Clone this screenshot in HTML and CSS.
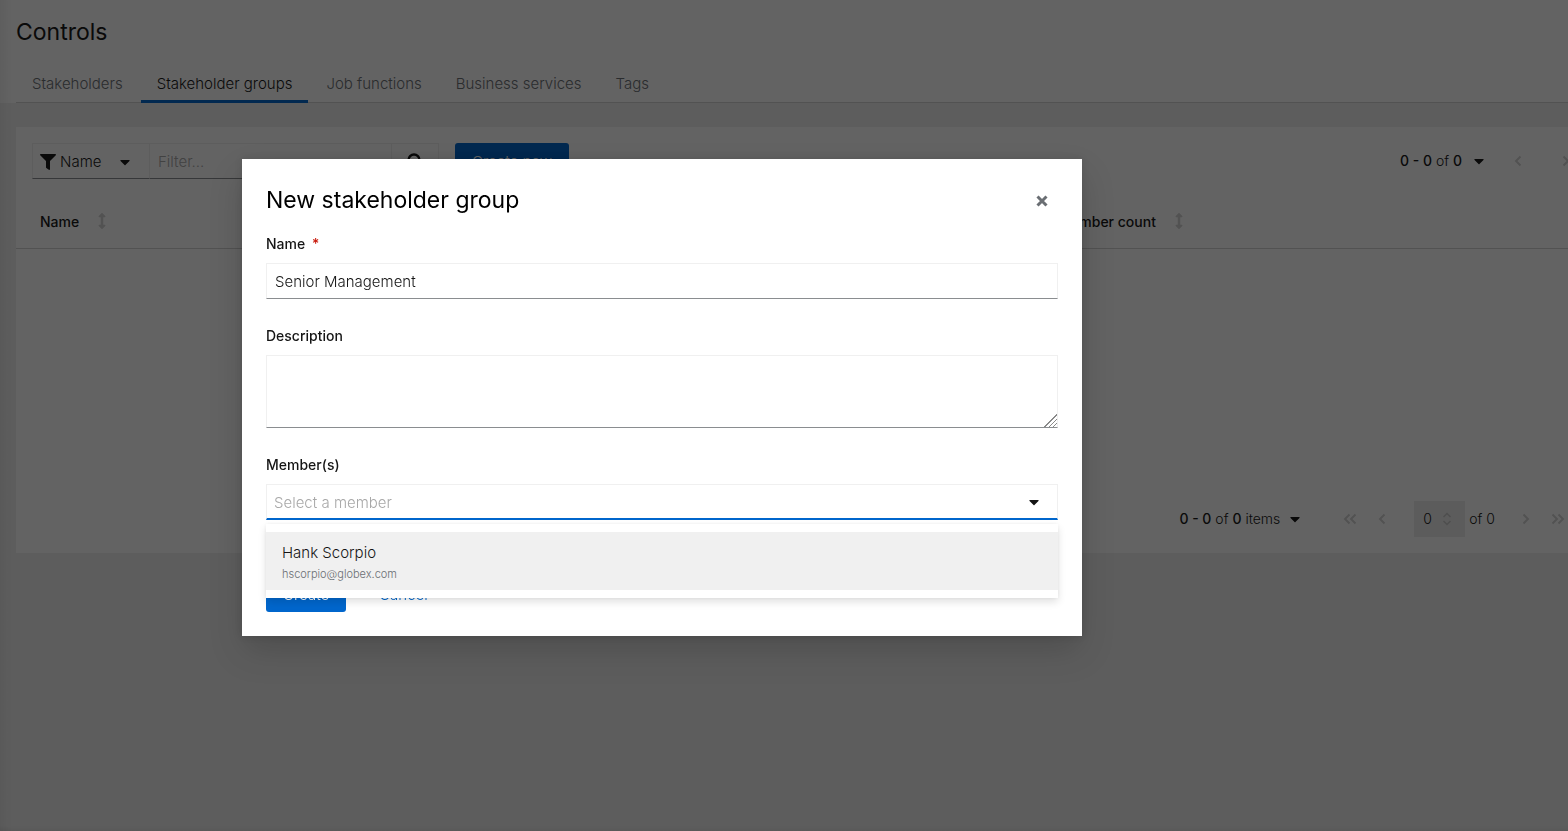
FILE: index.html
```html
<!DOCTYPE html>
<html lang="en">
<head>
<meta charset="utf-8">
<title>Controls</title>
<link rel="stylesheet" href="styles.css">
</head>
<body>
<svg class="defs" aria-hidden="true">
  <symbol id="caret" viewBox="0 0 320 512"><path d="M31.3 192h257.3c17.8 0 26.7 21.5 14.1 34.1L174.1 354.8c-7.8 7.8-20.5 7.8-28.3 0L17.2 226.1C4.6 213.5 13.5 192 31.3 192z"/></symbol>
  <symbol id="left" viewBox="0 0 10 12"><path d="M7.500 1.500 3 6l4.500 4.500" fill="none" stroke="currentColor" stroke-width="2"/></symbol>
  <symbol id="right" viewBox="0 0 10 12"><path d="M2.500 1.500 7 6l-4.500 4.500" fill="none" stroke="currentColor" stroke-width="2"/></symbol>
  <symbol id="first" viewBox="0 0 14 12"><path d="M6.500 1.500 2 6l4.500 4.500M12.500 1.500 8 6l4.500 4.500" fill="none" stroke="currentColor" stroke-width="2"/></symbol>
  <symbol id="last" viewBox="0 0 14 12"><path d="M1.500 1.500 6 6l-4.500 4.500M7.500 1.500 12 6l-4.500 4.500" fill="none" stroke="currentColor" stroke-width="2"/></symbol>
  <symbol id="sort" viewBox="0 0 256 512"><path d="M214.059 377.941H168V134.059h46.059c21.382 0 32.090-25.851 16.971-40.971L144.971 7.029c-9.373-9.373-24.568-9.373-33.941 0L24.971 93.088c-15.119 15.119-4.411 40.971 16.971 40.971H88v243.882H41.941c-21.382 0-32.090 25.851-16.971 40.971l86.059 86.059c9.373 9.373 24.568 9.373 33.941 0l86.059-86.059c15.120-15.119 4.412-40.971-16.970-40.971z"/></symbol>
</svg>
<div class="app">
  <header class="page-header">
    <h1 class="page-title">Controls</h1>
    <nav class="tabs" aria-label="Controls">
      <a class="tab" href="#stakeholders">Stakeholders</a>
      <a class="tab tab-current" href="#groups" aria-current="page">Stakeholder groups</a>
      <a class="tab" href="#jobs">Job functions</a>
      <a class="tab" href="#services">Business services</a>
      <a class="tab" href="#tags">Tags</a>
    </nav>
  </header>
  <main class="card">
    <div class="toolbar">
      <div class="filter">
        <button class="filter-toggle" type="button">
          <svg class="icon-filter" viewBox="0 0 512 512"><path d="M487.976 0H24.028C2.710 0-8.047 25.866 7.058 40.971L192 225.941V432c0 7.831 3.821 15.170 10.237 19.662l80 55.980C298.020 518.690 320 507.493 320 487.980V225.941l184.947-184.970C520.021 25.896 509.338 0 487.976 0z"/></svg>
          <span>Name</span>
          <svg class="caret"><use href="#caret"/></svg>
        </button>
        <input class="filter-input" type="search" placeholder="Filter..." aria-label="Filter">
        <button class="filter-search" type="button" aria-label="Search">
          <svg class="icon-search" viewBox="0 0 16 16"><circle cx="7" cy="7" r="5.500" fill="none" stroke="currentColor" stroke-width="2.400"/><path d="m11 11 4 4" stroke="currentColor" stroke-width="2.400"/></svg>
        </button>
      </div>
      <button class="button primary" type="button">Create new</button>
      <div class="pager pager-top">
        <button class="pager-menu" type="button"><span><b>0 - 0</b> of <b>0</b></span><svg class="caret"><use href="#caret"/></svg></button>
        <button class="pager-step" type="button" aria-label="Previous page" disabled><svg class="chevron"><use href="#left"/></svg></button>
        <button class="pager-step" type="button" aria-label="Next page" disabled><svg class="chevron"><use href="#right"/></svg></button>
      </div>
    </div>
    <table class="table">
      <thead>
        <tr>
          <th class="col-name" scope="col">Name<svg class="sort"><use href="#sort"/></svg></th>
          <th class="col-count" scope="col">Member count<svg class="sort"><use href="#sort"/></svg></th>
        </tr>
      </thead>
    </table>
    <div class="pager pager-bottom">
      <button class="pager-menu" type="button"><span><b>0 - 0</b> of <b>0</b> items</span><svg class="caret"><use href="#caret"/></svg></button>
      <button class="pager-step" type="button" aria-label="First page" disabled><svg class="chevron-double"><use href="#first"/></svg></button>
      <button class="pager-step" type="button" aria-label="Previous page" disabled><svg class="chevron"><use href="#left"/></svg></button>
      <label class="pager-page">
        <span class="pager-number">
          <input class="pager-input" type="number" value="0" aria-label="Current page" disabled>
          <svg class="spinner" viewBox="0 0 10 14"><path d="M1.500 5 5 1.500 8.500 5M1.500 9 5 12.500 8.500 9" fill="none" stroke="currentColor" stroke-width="1.500"/></svg>
        </span>
        <span>of 0</span>
      </label>
      <button class="pager-step" type="button" aria-label="Next page" disabled><svg class="chevron"><use href="#right"/></svg></button>
      <button class="pager-step" type="button" aria-label="Last page" disabled><svg class="chevron-double"><use href="#last"/></svg></button>
    </div>
  </main>
</div>
<div class="backdrop">
  <section class="modal" role="dialog" aria-modal="true" aria-labelledby="modal-title">
    <div class="modal-head">
      <h2 class="modal-title" id="modal-title">New stakeholder group</h2>
      <button class="modal-close" type="button" aria-label="Close"><svg class="icon-close" viewBox="0 0 12 12"><path d="m1.500 1.500 9 9M10.500 1.500l-9 9" stroke="currentColor" stroke-width="3"/></svg></button>
    </div>
    <form class="form">
      <div class="field">
        <label class="label" for="name">Name <span class="required">*</span></label>
        <input class="control" id="name" type="text" value="Senior Management">
      </div>
      <div class="field">
        <label class="label" for="description">Description</label>
        <textarea class="control area" id="description"></textarea>
      </div>
      <div class="field">
        <label class="label" for="members">Member(s)</label>
        <div class="select">
          <input class="select-input" id="members" type="text" role="combobox" aria-expanded="true" aria-controls="member-list" placeholder="Select a member">
          <button class="select-toggle" type="button" aria-label="Toggle members"><svg class="caret"><use href="#caret"/></svg></button>
          <div class="menu" id="member-list" role="listbox">
            <button class="option" type="button" role="option">
              <span class="option-name">Hank Scorpio</span>
              <span class="option-mail">hscorpio@globex.com</span>
            </button>
          </div>
        </div>
      </div>
      <div class="actions">
        <button class="button primary" type="button">Create</button>
        <button class="button link" type="button">Cancel</button>
      </div>
    </form>
  </section>
</div>
</body>
</html>
```
FILE: styles.css
```css
* { box-sizing: border-box; }
body {
  margin: 0;
  min-height: 100vh;
  overflow: hidden;
  background: #f0f0f0;
  color: #151515;
  font: 300 15px/24px Inter, "Liberation Sans", sans-serif;
}
button, input, textarea { font: inherit; color: inherit; margin: 0; }
button { border: 0; background: none; padding: 0; }
svg { display: block; fill: currentColor; flex: none; }
b { font-weight: 500; }
.defs { display: none; }

.app { margin-right: -46px; }
.page-header { background: #fff; padding: 17px 0 0 16px; }
.page-title { margin: 0; font-size: 23px; line-height: 31px; font-weight: 400; }
.tabs { display: flex; gap: 2px; margin-top: 16px; border-bottom: 1px solid #d2d2d2; }
.tab {
  padding: 8px 16px 7px;
  margin-bottom: -1px;
  color: #6a6e73;
  text-decoration: none;
  border-bottom: 0 solid #06c;
}
.tab-current { color: #151515; border-bottom-width: 3px; padding-bottom: 4px; }

.card { margin: 24px 16px; background: #fff; }
.toolbar { display: flex; align-items: center; gap: 16px; padding: 16px; }
.filter { display: flex; height: 36px; }
.filter-toggle, .filter-input, .filter-search { border: 1px solid #f0f0f0; border-bottom-color: #8a8d90; }
.filter-toggle { display: flex; align-items: center; width: 117px; padding: 1px 7px 0; gap: 4px; border-right: 0; }
.filter-toggle .caret { margin: 0 12px 0 auto; }
.filter-input { width: 243px; padding: 2px 8px 0; appearance: none; background: none; }
.filter-search { width: 47px; display: grid; place-items: center; border-left: 0; }
::placeholder { color: #a8a8a8; opacity: 1; }
.icon-filter, .icon-search { width: 16px; height: 16px; }
.caret { width: 10px; height: 16px; }

.button { height: 36px; padding: 2px 17px 0; border-radius: 3px; }
.primary { background: #06c; color: #fff; }
.link { color: #06c; }

.pager { display: flex; align-items: center; font-size: 14px; line-height: 20px; }
.pager-top { margin-left: auto; }
.pager-menu { display: flex; align-items: center; gap: 12px; padding: 8px; }
.pager-step { height: 36px; display: grid; place-items: center; color: #d2d2d2; }
.pager-top .pager-step { width: 48px; }
.pager-top .pager-menu { margin-right: 2px; }
.pager-top .pager-step:last-child { margin-right: -8px; }
.pager-bottom { justify-content: flex-end; padding: 16px 24px; margin-top: 236px; }
.pager-bottom .pager-step { width: 32px; }
.pager-bottom .pager-menu { margin-right: 26px; gap: 10px; }
.chevron { width: 10px; height: 12px; }
.chevron-double { width: 14px; height: 12px; }
.pager-page { display: flex; align-items: center; gap: 4px; margin: 0 15px 0 16px; }
.pager-number { display: flex; align-items: center; width: 51px; height: 36px; padding: 0 13px 0 9px; background: #ececec; }
.pager-input { width: 100%; min-width: 0; border: 0; padding: 0; background: none; appearance: textfield; -moz-appearance: textfield; }
.pager-input::-webkit-inner-spin-button { display: none; }
.spinner { width: 10px; height: 14px; color: #c8c8c8; }

.table { width: 100%; border-collapse: collapse; border-bottom: 1px solid #d2d2d2; }
.table th { height: 53px; padding: 0 8px; text-align: left; font-size: 14px; line-height: 21px; font-weight: 500; }
.table .col-name { width: 65%; padding-left: 24px; }
.table .col-count { padding-left: 14px; }
.sort { display: inline-block; width: 8px; height: 16px; margin-left: 19px; color: #d2d2d2; vertical-align: -2px; }

.backdrop {
  position: fixed;
  inset: 0;
  display: flex;
  align-items: center;
  justify-content: center;
  padding: 0 244px 36px 0;
  background:
    linear-gradient(90deg, rgba(3, 3, 3, 0.05), transparent 12px),
    linear-gradient(0deg, rgba(3, 3, 3, 0.06), transparent 5px),
    rgba(3, 3, 3, 0.62);
}
.modal {
  width: 840px;
  max-width: 100%;
  padding: 24px;
  background: #fff;
  box-shadow: 0 16px 32px 0 rgba(3, 3, 3, 0.16), 0 0 8px 0 rgba(3, 3, 3, 0.1);
}
.modal-head { display: flex; align-items: center; justify-content: space-between; }
.modal-title { margin: 0; padding-top: 2px; font-size: 23px; line-height: 30px; font-weight: 400; color: #000; }
.modal-close { padding: 12px 10px 8px; color: #6a6e73; }
.icon-close { width: 12px; height: 12px; }
.form { margin-top: 19px; display: grid; gap: 27px; }
.field { display: grid; gap: 9px; }
.label { font-size: 14px; line-height: 20px; font-weight: 500; }
.required { margin-left: 3px; color: #c9190b; }
.control { width: 100%; height: 36px; padding: 0 8px; background: #fff; border: 1px solid #f0f0f0; border-bottom-color: #8a8d90; border-radius: 0; outline: 0; }
.area { display: block; height: 73px; resize: vertical; }
.area::-webkit-resizer {
  background:
    linear-gradient(135deg, #fff 55%, transparent 55%),
    repeating-linear-gradient(135deg, #8a8a8a 0 1px, #fff 1px 3px);
}
.select { position: relative; display: flex; height: 36px; border: 1px solid #f0f0f0; border-bottom: 2px solid #06c; }
.select-input { flex: 1; min-width: 0; padding: 2px 7px 0; border: 0; background: none; outline: 0; }
.select-toggle { padding: 0 18px; }
.menu {
  position: absolute;
  top: 39px;
  left: -1px;
  right: -1px;
  padding: 8px 0;
  background: #fff;
  box-shadow: 0 4px 8px 0 rgba(3, 3, 3, 0.12), 0 0 4px 0 rgba(3, 3, 3, 0.06);
}
.option { display: flex; flex-direction: column; width: 100%; padding: 9px 16px 7px; background: #f0f0f0; text-align: left; }
.option-mail { font-size: 11px; line-height: 18px; color: #6a6e73; }
.actions { display: flex; gap: 16px; margin-top: 29px; }
```
